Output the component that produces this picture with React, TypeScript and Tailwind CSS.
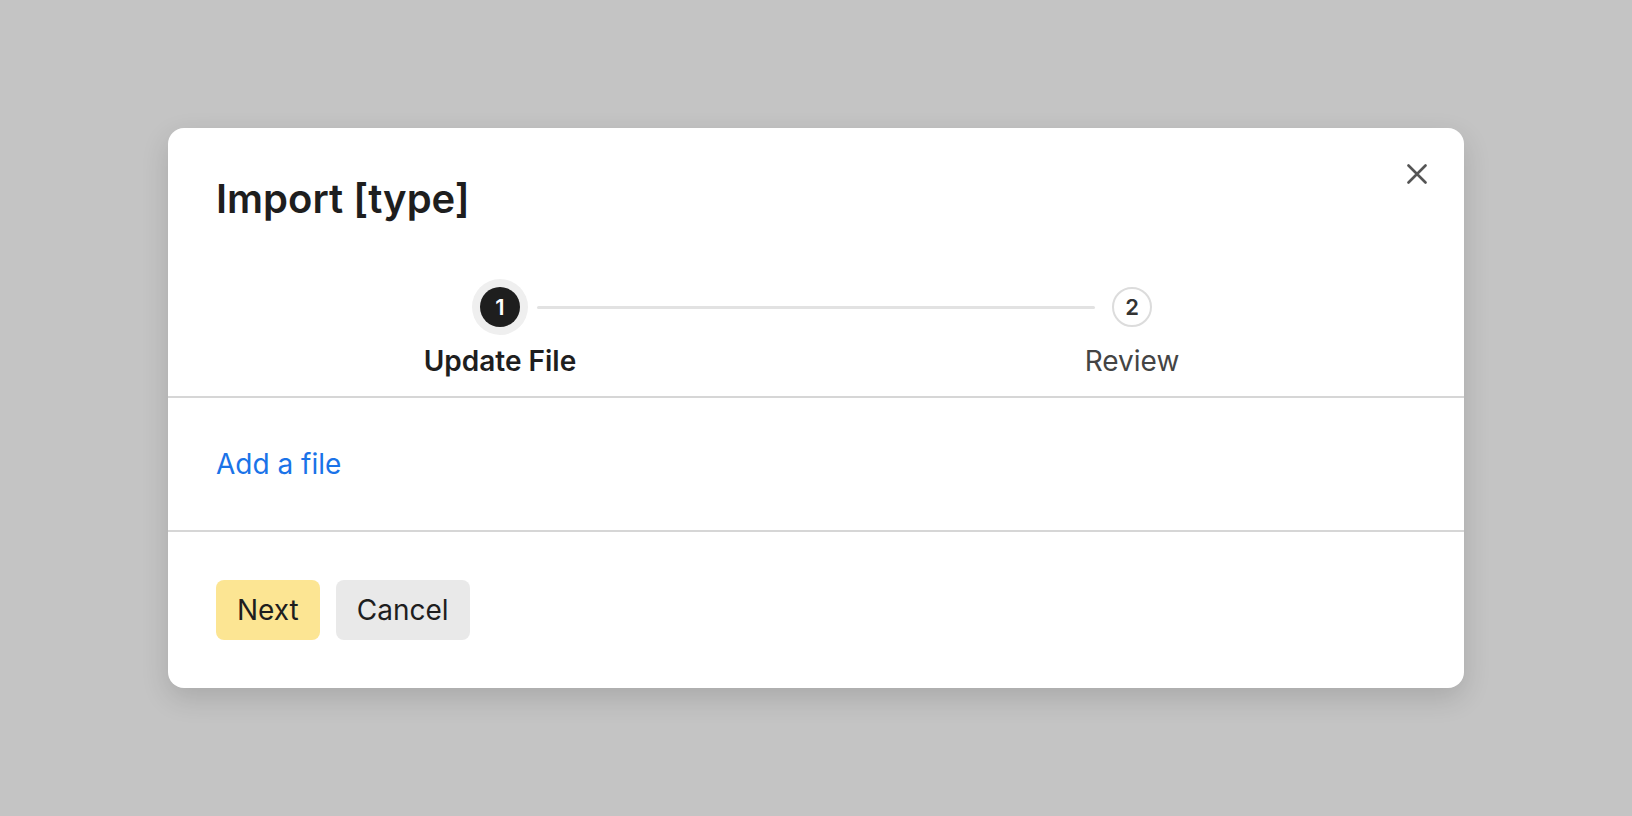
import { useState } from "react";

type Step = { n: number; label: string };

const steps: Step[] = [
  { n: 1, label: "Update File" },
  { n: 2, label: "Review" },
];

function StepDot({ step, active }: { step: Step; active: boolean }) {
  return (
    <div className="flex w-10 flex-col items-center">
      {active ? (
        <div className="flex h-10 w-10 items-center justify-center rounded-full bg-[#1e1e1e] text-[22px] font-semibold text-white shadow-[0_0_0_8px_#efefef]">
          {step.n}
        </div>
      ) : (
        <div className="flex h-10 w-10 items-center justify-center rounded-full border-2 border-[#dcdcdc] bg-white text-[22px] font-semibold text-[#333]">
          {step.n}
        </div>
      )}
      <div
        className={
          active
            ? "mt-[14px] whitespace-nowrap text-[28px] leading-[40px] font-semibold text-[#1e1e1e]"
            : "mt-[14px] whitespace-nowrap text-[28px] leading-[40px] text-[#444]"
        }
      >
        {step.label}
      </div>
    </div>
  );
}

function CloseIcon() {
  return (
    <svg width="20" height="20" viewBox="0 0 20 20" fill="none">
      <path d="M1.5 1.5 18.5 18.5M18.5 1.5 1.5 18.5" stroke="#555" strokeWidth="2.6" strokeLinecap="round" />
    </svg>
  );
}

export default function App() {
  const [current] = useState(1);

  return (
    <div className="flex h-[816px] w-full items-center justify-center bg-[#c4c4c4] font-['Inter',_sans-serif]">
      <div className="relative w-[1296px] rounded-2xl bg-white shadow-[0_10px_28px_rgba(0,0,0,0.14)]">
        <button className="absolute right-[27px] top-[26px] flex h-10 w-10 items-center justify-center">
          <CloseIcon />
        </button>

        {/* title + stepper */}
        <div className="px-12 pt-12 pb-[15px]">
          <h1 className="text-[40px] leading-[46px] font-semibold text-[#1e1e1e]">Import [type]</h1>
          <div className="mt-[65px] flex justify-center">
            <div className="flex items-start">
              <StepDot step={steps[0]} active={current === 1} />
              <div className="mx-[17px] mt-[19px] h-[3px] w-[558px] rounded-full bg-[#e2e2e2]" />
              <StepDot step={steps[1]} active={current === 2} />
            </div>
          </div>
        </div>
        <div className="h-[2px] bg-[#d6d6d6]" />

        <div className="px-12 py-[46px]">
          <a href="#" className="text-[28px] leading-[40px] text-[#1a73e8]">
            Add a file
          </a>
        </div>
        <div className="h-[2px] bg-[#d6d6d6]" />

        <div className="flex gap-4 p-12">
          <button className="h-[60px] rounded-lg bg-[#fce593] px-[21px] text-[28px] text-[#1e1e1e]">Next</button>
          <button className="h-[60px] rounded-lg bg-[#e9e9e9] px-[21px] text-[28px] text-[#1e1e1e]">Cancel</button>
        </div>
      </div>
    </div>
  );
}
